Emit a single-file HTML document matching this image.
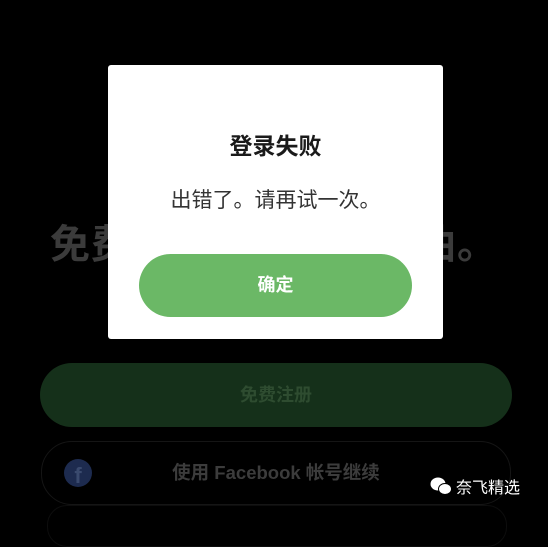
<!DOCTYPE html>
<html><head><meta charset="utf-8"><style>
body{margin:0;width:548px;height:522px;background:#000;position:relative;overflow:hidden;font-family:"Liberation Sans","Noto Sans CJK SC",sans-serif}
.abs{position:absolute}
</style></head><body>
<div class="abs" style="left:50px;top:212px;width:460px;font-size:40px;font-weight:bold;color:#3b3b3b;white-space:nowrap;letter-spacing:0.7px">免费收听数百万首歌曲。</div>
<div class="abs" style="left:40px;top:363px;width:472px;height:64px;border-radius:32px;background:#15301a;color:#2e4c30;font-size:18px;font-weight:bold;text-align:center;line-height:64px">免费注册</div>
<div class="abs" style="left:41px;top:441px;width:468px;height:62px;border-radius:31px;border:1px solid #151515;color:#3c3c3c;font-size:18.5px;font-weight:bold;text-align:center;line-height:62px">使用 Facebook 帐号继续</div>
<div class="abs" style="left:47px;top:505px;width:458px;height:40px;border-radius:20px;border:1px solid #0d0d0d"></div>
<div class="abs" style="left:64px;top:459px;width:28px;height:28px;border-radius:50%;background:#1d2b4f;color:#3a4a6e;font-weight:bold;font-size:22px;text-align:center;line-height:34px;overflow:hidden">f</div>
<svg class="abs" style="left:430px;top:476px" width="22" height="20" viewBox="0 0 22 20"><ellipse cx="8" cy="8" rx="7.5" ry="6.5" fill="#fff"/><ellipse cx="15" cy="13" rx="6.5" ry="5.5" fill="#fff" stroke="#000" stroke-width="1"/></svg>
<div class="abs" style="left:456px;top:474px;color:#fff;font-size:16px">奈飞精选</div>
<div class="abs" style="left:108px;top:65px;width:335px;height:274px;background:#fff;border-radius:3px">
<div class="abs" style="left:0;top:62px;width:100%;text-align:center;font-size:23px;font-weight:bold;color:#1a1a1a">登录失败</div>
<div class="abs" style="left:0;top:119px;width:100%;text-align:center;font-size:21px;color:#333">出错了。请再试一次。</div>
<div class="abs" style="left:31px;top:189px;width:273px;height:63px;border-radius:32px;background:#6bb866;color:#fff;font-size:18px;font-weight:bold;text-align:center;line-height:63px">确定</div>
</div>
</body></html>
